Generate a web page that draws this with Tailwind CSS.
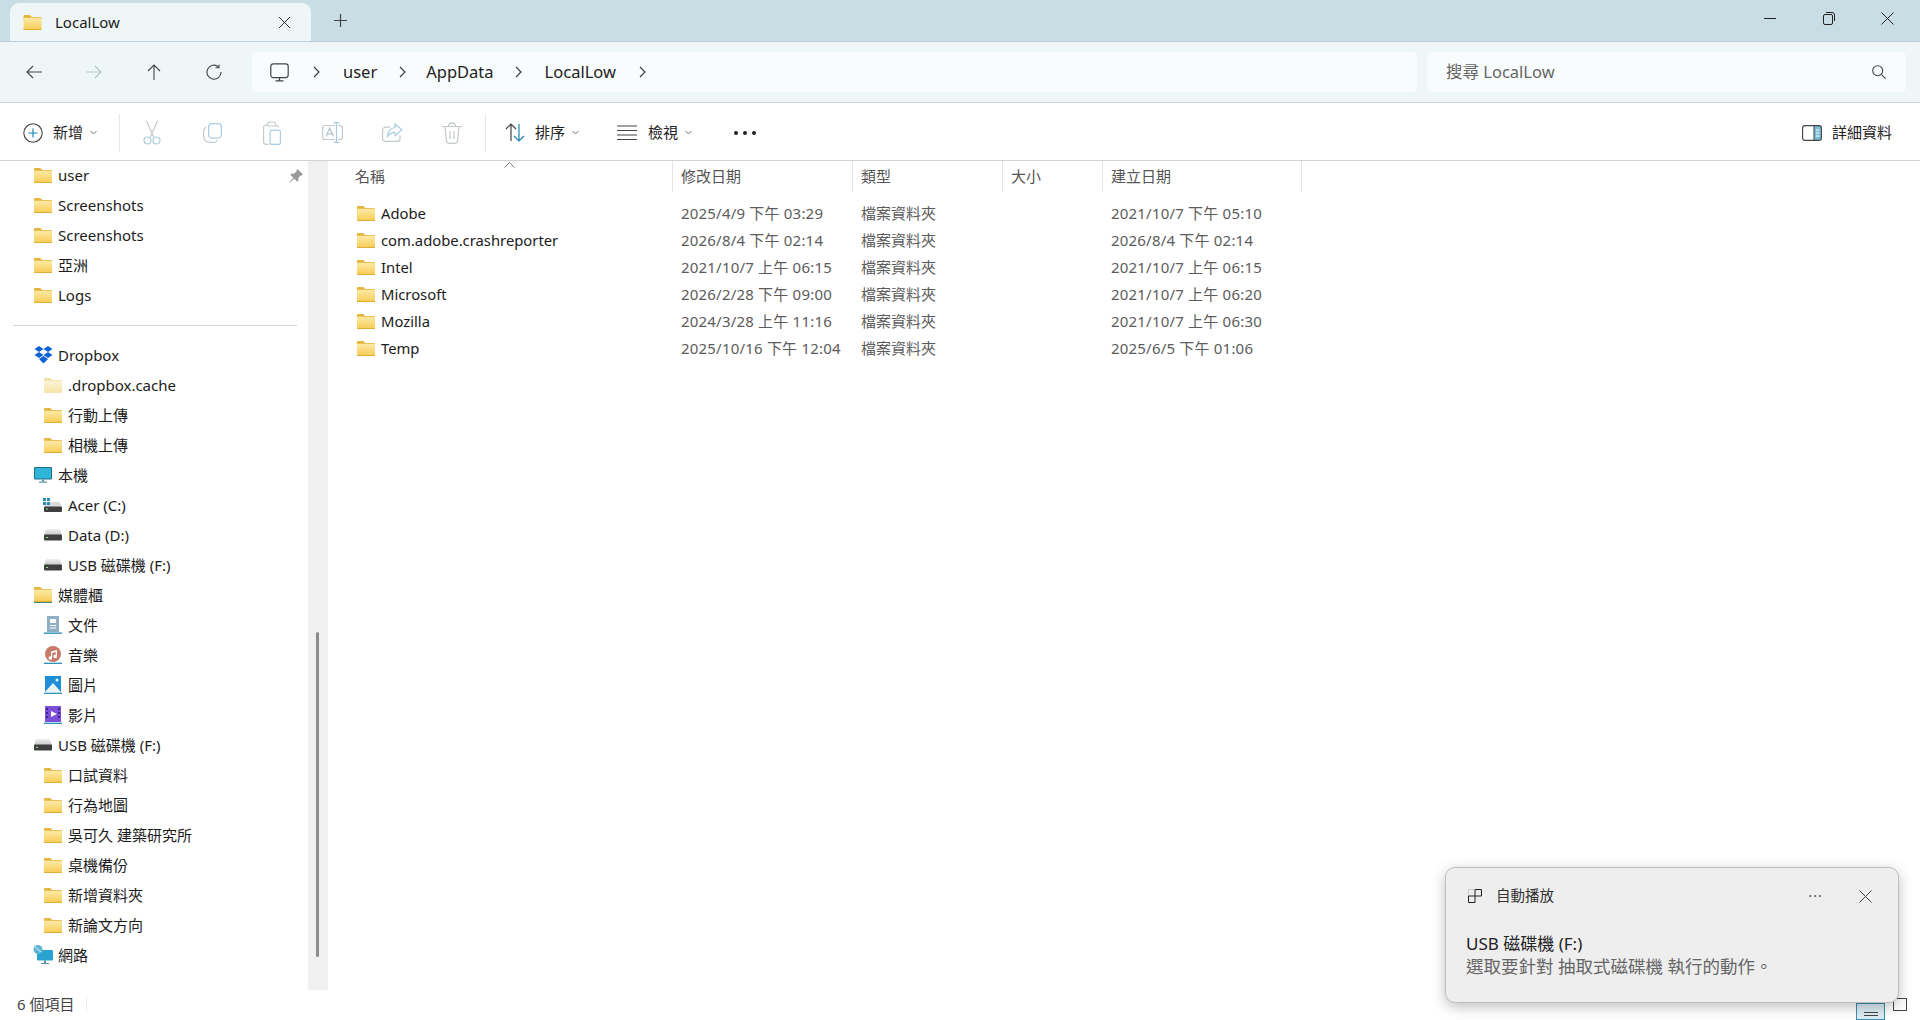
<!DOCTYPE html>
<html lang="zh-Hant">
<head>
<meta charset="UTF-8">
<title>LocalLow - 檔案總管</title>
<script src="https://cdn.jsdelivr.net/npm/@tailwindcss/browser@4"></script>
</head>
<body class="w-[1920px] h-[1020px] overflow-hidden bg-white text-[#1c1c1c] text-[15px] font-['Noto_Sans','Noto_Sans_CJK_TC',sans-serif]">

<!-- shared icons -->
<svg width="0" height="0" class="absolute">
  <defs>
    <linearGradient id="fg" x1="0" y1="0" x2="0" y2="1"><stop offset="0" stop-color="#fdeaa6"/><stop offset="1" stop-color="#f7cb55"/></linearGradient>
    <linearGradient id="fp" x1="0" y1="0" x2="0" y2="1"><stop offset="0" stop-color="#fbf3d6"/><stop offset="1" stop-color="#f6e3a8"/></linearGradient>
    <linearGradient id="dg" x1="0" y1="0" x2="0" y2="1"><stop offset="0" stop-color="#eeeeee"/><stop offset="1" stop-color="#c6c6c6"/></linearGradient>
    <symbol id="folder" viewBox="0 0 18 15">
      <path d="M0 1.2C0 .5.5 0 1.2 0h4.6c.5 0 .8.2 1.1.5L8.300 2H16.800c.7 0 1.200.5 1.200 1.200V5H0z" fill="#e5b53d"/>
      <rect y="2.800" width="18" height="12.200" rx="1" fill="url(#fg)"/>
      <rect y="14" width="18" height="1" fill="#e2ad35"/>
    </symbol>
    <symbol id="folderpale" viewBox="0 0 18 15">
      <path d="M0 1.2C0 .5.5 0 1.2 0h4.600c.5 0 .8.2 1.100.5L8.300 2h8.500c.7 0 1.200.5 1.200 1.200V5H0z" fill="#efdfa8"/>
      <rect y="2.800" width="18" height="12.200" rx="1" fill="url(#fp)"/>
    </symbol>
    <symbol id="drive" viewBox="0 0 18 12">
      <path d="M3.500 0h11c1 0 1.500.5 2 1.500L18 6.500H0l1.500-5C2 .5 2.500 0 3.500 0z" fill="url(#dg)"/>
      <rect y="5.500" width="18" height="6" rx="1" fill="#3f3f3f"/>
      <rect x="2" y="8" width="2" height="1" fill="#9adf8f"/>
    </symbol>
  </defs>
</svg>

<!-- title bar -->
<div class="h-[42px] flex bg-[#c9dde4] border-b border-[#bccfd8] pl-[10px]">
  <div class="w-[301px] h-[38px] mt-[3px] px-[13px] flex items-center bg-[#eff6f8] rounded-t-[9px]">
    <svg class="w-[19px] h-[15px]"><use href="#folder"/></svg>
    <span class="ml-[13px] text-[15px]">LocalLow</span>
    <svg class="ml-auto mr-[7px]" width="13" height="13" viewBox="0 0 13 13" fill="none" stroke="#333" stroke-width="1"><path d="M1 1l11 11M12 1L1 12"/></svg>
  </div>
  <div class="w-[58px] flex items-center justify-center">
    <svg width="13" height="13" viewBox="0 0 13 13" fill="none" stroke="#444" stroke-width="1.200"><path d="M6.500 0v13M0 6.500h13"/></svg>
  </div>
  <div class="ml-auto flex h-[36px] pr-[3px]">
    <div class="w-[59px] flex items-center justify-center"><div class="w-[12px] h-px bg-[#222]"></div></div>
    <div class="w-[59px] flex items-center justify-center">
      <svg width="12" height="13" viewBox="0 0 12 13" fill="none" stroke="#222" stroke-width="1"><rect x=".5" y="2.500" width="9" height="10" rx="1.500"/><path d="M3 .5h6c1.500 0 2.500 1 2.500 2.500v6"/></svg>
    </div>
    <div class="w-[59px] flex items-center justify-center">
      <svg width="13" height="13" viewBox="0 0 13 13" fill="none" stroke="#222" stroke-width="1"><path d="M.5.500l12 12M12.500.500l-12 12"/></svg>
    </div>
  </div>
</div>

<!-- navigation row -->
<div class="h-[61px] flex items-center bg-[#eff6f8] border-b border-[#c9d2d6] pl-[4px] pr-[14px]">
  <div class="w-[60px] flex justify-center">
    <svg width="16" height="14" viewBox="0 0 16 14" fill="none" stroke="#444" stroke-width="1.100"><path d="M16 7H1M7 1L1 7l6 6"/></svg>
  </div>
  <div class="w-[60px] flex justify-center">
    <svg width="16" height="14" viewBox="0 0 16 14" fill="none" stroke="#b8c2c6" stroke-width="1.100"><path d="M0 7h15M9 1l6 6-6 6"/></svg>
  </div>
  <div class="w-[60px] flex justify-center">
    <svg width="14" height="16" viewBox="0 0 14 16" fill="none" stroke="#444" stroke-width="1.100"><path d="M7 16V1M1 7l6-6 6 6"/></svg>
  </div>
  <div class="w-[60px] flex justify-center">
    <svg width="16" height="16" viewBox="0 0 16 16" fill="none" stroke="#444" stroke-width="1.100"><path d="M12.500 2.800A7 7 0 1 0 15 8"/><path d="M9.500 2.800h3.500V-.5" transform="translate(0 1)"/></svg>
  </div>
  <div class="ml-[8px] w-[1165px] h-[40px] rounded-[5px] bg-[#f9fcfd] flex items-center text-[16.500px] text-[#222]">
    <svg class="ml-[18px]" width="19" height="19" viewBox="0 0 19 19" fill="none" stroke="#444" stroke-width="1.200"><rect x=".8" y=".8" width="17.400" height="13.800" rx="2.500"/><path d="M9.500 14.600v3M5.500 17.800h8"/></svg>
    <svg class="ml-[24px]" width="7" height="12" viewBox="0 0 7 12" fill="none" stroke="#333" stroke-width="1.100"><path d="M1 1l5 5-5 5"/></svg>
    <span class="ml-[23px]">user</span>
    <svg class="ml-[22px]" width="7" height="12" viewBox="0 0 7 12" fill="none" stroke="#333" stroke-width="1.100"><path d="M1 1l5 5-5 5"/></svg>
    <span class="ml-[20px]">AppData</span>
    <svg class="ml-[21px]" width="7" height="12" viewBox="0 0 7 12" fill="none" stroke="#333" stroke-width="1.100"><path d="M1 1l5 5-5 5"/></svg>
    <span class="ml-[23px]">LocalLow</span>
    <svg class="ml-[23px]" width="7" height="12" viewBox="0 0 7 12" fill="none" stroke="#333" stroke-width="1.100"><path d="M1 1l5 5-5 5"/></svg>
  </div>
  <div class="ml-[10px] w-[479px] h-[40px] rounded-[5px] bg-[#f9fcfd] flex items-center pl-[19px] pr-[20px] text-[16.500px] text-[#666]">
    <span>搜尋 LocalLow</span>
    <svg class="ml-auto" width="14" height="14" viewBox="0 0 14 14" fill="none" stroke="#444" stroke-width="1.100"><circle cx="5.700" cy="5.700" r="5"/><path d="M9.300 9.300l4.300 4.300"/></svg>
  </div>
</div>

<!-- command bar -->
<div class="h-[58px] pt-[2px] flex items-center bg-white border-b border-[#cfd3d6] text-[15px] text-[#222]">
  <div class="w-[120px] flex items-center pl-[23px]">
    <svg width="20" height="20" viewBox="0 0 20 20" fill="none"><circle cx="10" cy="10" r="9.200" stroke="#444" stroke-width="1.100"/><path d="M10 5.500v9M5.500 10h9" stroke="#1b87b3" stroke-width="1.200"/></svg>
    <span class="ml-[10px]">新增</span>
    <svg class="ml-[7px]" width="7" height="5" viewBox="0 0 7 5" fill="none" stroke="#777"><path d="M.5 1l3 3 3-3"/></svg>
  </div>
  <div class="w-px h-[38px] bg-[#e8e8e8] -ml-px"></div>
  <div class="w-[60px] flex justify-center ml-[2px]">
    <svg width="18" height="24" viewBox="0 0 18 24" fill="none" stroke-width="1.200"><path d="M3.500 0l7.500 16.500M14.500 0L7 16.500" stroke="#c4c9cc"/><circle cx="4.500" cy="19.500" r="3.500" stroke="#a9cde0"/><circle cx="13.500" cy="19.500" r="3.500" stroke="#a9cde0"/></svg>
  </div>
  <div class="w-[60px] flex justify-center">
    <svg width="19" height="20" viewBox="0 0 19 20" fill="none" stroke-width="1.200"><rect x="5.600" y=".6" width="12.800" height="14.500" rx="3.500" stroke="#a9cde0"/><path d="M3.300 4.300C1.600 5 .6 6.500.6 8.300v5.200c0 3.300 2.600 5.900 5.900 5.900h4.200c1.700 0 3-.8 3.700-2.200" stroke="#c4c9cc"/></svg>
  </div>
  <div class="w-[60px] flex justify-center">
    <svg width="18" height="24" viewBox="0 0 18 24" fill="none" stroke-width="1.200"><path d="M4.500 4H3C1.600 4 .6 5 .6 6.500v14C.6 22 1.600 23.400 3 23.400h2.500" stroke="#c4c9cc"/><path d="M4.500 3.500C4.500 2 5.500 1 7 1h3c1.500 0 2.500 1 2.500 2.500V5h-8zM12.500 4.500h1c1.300 0 2 .8 2 2" stroke="#c4c9cc"/><rect x="7.100" y="9.100" width="10.300" height="14.300" rx="2" stroke="#a9cde0"/></svg>
  </div>
  <div class="w-[60px] flex justify-center">
    <svg width="21" height="21" viewBox="0 0 21 21" fill="none" stroke-width="1.200"><path d="M13 3.500H3.200C1.800 3.500.6 4.600.6 6v9c0 1.400 1.200 2.500 2.600 2.500H13M16 3.500h2c1.300 0 2.400 1.100 2.400 2.500v9c0 1.400-1.100 2.500-2.400 2.500h-2" stroke="#c4c9cc"/><path d="M14.500 .6v19.800M11.500 .6h6M11.500 20.400h6" stroke="#a9cde0"/><path d="M4 14.500l3.700-8.500 3.700 8.500M5.300 11.800h4.800" stroke="#b5c3cb"/></svg>
  </div>
  <div class="w-[60px] flex justify-center">
    <svg width="21" height="19" viewBox="0 0 21 19" fill="none" stroke-width="1.200"><path d="M18 12.500v2.900c0 1.700-1.300 3-3 3H3.600c-1.700 0-3-1.300-3-3V7.200c0-1.700 1.300-3 3-3H8" stroke="#c4c9cc"/><path d="M13 1l7 5.800-7 5.800V9.300c-3.500 0-5.700 1.300-7.300 4C5.700 9 8.500 4.800 13 4.500z" stroke="#a9cde0"/></svg>
  </div>
  <div class="w-[60px] flex justify-center">
    <svg width="20" height="22" viewBox="0 0 20 22" fill="none" stroke="#c4c9cc" stroke-width="1.200"><path d="M0 4.500h20M6.500 4.500C6.500 2 8 .8 10 .8s3.500 1.200 3.500 3.700M3 4.500l1.500 14.300c.1 1.600 1.100 2.600 2.700 2.600h5.600c1.600 0 2.600-1 2.700-2.600L17 4.500M8 9v8M12 9v8"/></svg>
  </div>
  <div class="w-px h-[38px] bg-[#e8e8e8] ml-[3px]"></div>
  <div class="w-[124px] flex items-center pl-[19px]">
    <svg width="21" height="19" viewBox="0 0 21 19" fill="none" stroke-width="1.200"><path d="M6 18V1M1 6l5-5 5 5" stroke="#444"/><path d="M14 1v17M9 13l5 5 5-5" stroke="#1b87b3"/></svg>
    <span class="ml-[9px]">排序</span>
    <svg class="ml-[7px]" width="7" height="5" viewBox="0 0 7 5" fill="none" stroke="#777"><path d="M.5 1l3 3 3-3"/></svg>
  </div>
  <div class="w-[106px] flex items-center pl-[7px]">
    <svg width="20" height="15" viewBox="0 0 20 15" fill="none" stroke="#444" stroke-width="1.100"><path d="M0 1h20M0 5.500h20M0 10h20M0 14.500h20"/></svg>
    <span class="ml-[11px]">檢視</span>
    <svg class="ml-[7px]" width="7" height="5" viewBox="0 0 7 5" fill="none" stroke="#777"><path d="M.5 1l3 3 3-3"/></svg>
  </div>
  <div class="ml-[18px] flex gap-[5px]">
    <div class="w-[4px] h-[4px] rounded-full bg-[#222]"></div>
    <div class="w-[4px] h-[4px] rounded-full bg-[#222]"></div>
    <div class="w-[4px] h-[4px] rounded-full bg-[#222]"></div>
  </div>
  <div class="ml-auto flex items-center pr-[28px]">
    <svg width="20" height="16" viewBox="0 0 20 16" fill="none"><rect x="12" y="1" width="7.400" height="14" fill="#79bcd8"/><rect x=".6" y=".6" width="18.800" height="14.800" rx="2.500" stroke="#444" stroke-width="1.100"/><path d="M12 1v14" stroke="#444"/><path d="M14 5h3.500M14 8h3.500M14 11h3.500" stroke="#fff"/></svg>
    <span class="ml-[10px]">詳細資料</span>
  </div>
</div>

<!-- body -->
<div class="h-[829px] flex">
  <!-- navigation pane -->
  <div class="w-[308px] overflow-hidden -mt-px">
    <div class="h-[30px] flex items-center pl-[34px] relative">
      <svg class="w-[18px] h-[15px]"><use href="#folder"/></svg><span class="ml-[6px]">user</span>
      <svg class="absolute left-[289px] top-[9px]" width="14" height="14" viewBox="0 0 14 14" fill="#9a9a9a"><path d="M8.500 0L14 5.500l-1 1-1-.2-2.700 2.700.2 2.500-1.200 1.200-3-3L1 13.500l-.5-.5 3.800-4.300-3-3L2.500 4.500 5 4.700 7.700 2 7.500 1z"/></svg>
    </div>
    <div class="h-[30px] flex items-center pl-[34px]"><svg class="w-[18px] h-[15px]"><use href="#folder"/></svg><span class="ml-[6px]">Screenshots</span></div>
    <div class="h-[30px] flex items-center pl-[34px]"><svg class="w-[18px] h-[15px]"><use href="#folder"/></svg><span class="ml-[6px]">Screenshots</span></div>
    <div class="h-[30px] flex items-center pl-[34px]"><svg class="w-[18px] h-[15px]"><use href="#folder"/></svg><span class="ml-[6px]">亞洲</span></div>
    <div class="h-[30px] flex items-center pl-[34px]"><svg class="w-[18px] h-[15px]"><use href="#folder"/></svg><span class="ml-[6px]">Logs</span></div>
    <div class="ml-[13px] mr-[11px] mt-[15px] mb-[14px] h-px bg-[#d5d5d5]"></div>

    <div class="h-[30px] flex items-center pl-[34px]">
      <svg width="19" height="18" viewBox="0 0 19 18" fill="#0f62d6"><path d="M5 0l4.500 3L5 6 .5 3zM14 0l4.500 3L14 6 9.500 3zM.5 9L5 6l4.500 3L5 12zM18.500 9L14 6 9.500 9l4.500 3zM9.500 10l4.500 3-4.500 4.500L5 13z"/></svg>
      <span class="ml-[5px]">Dropbox</span>
    </div>
    <div class="h-[30px] flex items-center pl-[44px]"><svg class="w-[18px] h-[15px]"><use href="#folderpale"/></svg><span class="ml-[6px]">.dropbox.cache</span></div>
    <div class="h-[30px] flex items-center pl-[44px]"><svg class="w-[18px] h-[15px]"><use href="#folder"/></svg><span class="ml-[6px]">行動上傳</span></div>
    <div class="h-[30px] flex items-center pl-[44px]"><svg class="w-[18px] h-[15px]"><use href="#folder"/></svg><span class="ml-[6px]">相機上傳</span></div>

    <div class="h-[30px] flex items-center pl-[34px]">
      <svg width="18" height="16" viewBox="0 0 18 16"><rect width="18" height="12.500" rx="1" fill="#1e6f8c"/><rect x="1" y="1" width="16" height="10.500" fill="#2fb6d6"/><rect x="8" y="12.500" width="2" height="2" fill="#5b8fa6"/><rect x="5" y="14.500" width="8" height="1.200" fill="#5b8fa6"/></svg>
      <span class="ml-[6px]">本機</span>
    </div>
    <div class="h-[30px] flex items-center pl-[43px]">
      <svg width="19" height="15" viewBox="0 0 19 15"><path d="M4.500 4h11c1 0 1.500.5 2 1.500L19 9.500H1l1.500-4c.5-1 1-1.500 2-1.500z" fill="#dadada"/><rect x="1" y="8.500" width="18" height="5.500" rx="1" fill="#3f3f3f"/><rect x="3" y="10.500" width="2" height="1" fill="#9adf8f"/><path d="M0 0h3v3H0zM4 0h3v3H4zM0 4h3v3H0zM4 4h3v3H4z" fill="#2d8fb5"/></svg>
      <span class="ml-[6px]">Acer (C:)</span>
    </div>
    <div class="h-[30px] flex items-center pl-[44px]"><svg class="w-[18px] h-[12px]"><use href="#drive"/></svg><span class="ml-[6px]">Data (D:)</span></div>
    <div class="h-[30px] flex items-center pl-[44px]"><svg class="w-[18px] h-[12px]"><use href="#drive"/></svg><span class="ml-[6px]">USB 磁碟機 (F:)</span></div>

    <div class="h-[30px] flex items-center pl-[34px]">
      <svg width="18" height="16" viewBox="0 0 18 16"><use href="#folder" width="18" height="15"/><rect y="15" width="18" height="1" fill="#3f8f7a"/></svg>
      <span class="ml-[6px]">媒體櫃</span>
    </div>
    <div class="h-[30px] flex items-center pl-[44px]">
      <svg width="18" height="18" viewBox="0 0 18 18"><rect x="3" width="12" height="16" fill="#8fb0c4"/><path d="M6 3h6v4H6zM6 9h6v1H6zM6 11.500h6v1H6z" fill="#fff"/><rect y="16.500" width="18" height="1.300" fill="#1b87b3"/></svg>
      <span class="ml-[6px]">文件</span>
    </div>
    <div class="h-[30px] flex items-center pl-[44px]">
      <svg width="18" height="18" viewBox="0 0 18 18"><circle cx="9" cy="8" r="8" fill="#c9796a"/><path d="M7 5.500l6-1.500v6.500a1.800 1.800 0 1 1-1.200-1.700V6l-3.600 1v5a1.800 1.800 0 1 1-1.200-1.700z" fill="#fff"/><rect y="16.700" width="18" height="1.200" fill="#1b87b3"/></svg>
      <span class="ml-[6px]">音樂</span>
    </div>
    <div class="h-[30px] flex items-center pl-[44px]">
      <svg width="18" height="18" viewBox="0 0 18 18"><rect x="1" width="16" height="16" fill="#1e8fd6"/><path d="M1 16l8-9 8 9z" fill="#e9f5fb"/><circle cx="13" cy="4" r="1.500" fill="#e9f5fb"/><rect y="16.700" width="18" height="1.200" fill="#1b87b3"/></svg>
      <span class="ml-[6px]">圖片</span>
    </div>
    <div class="h-[30px] flex items-center pl-[44px]">
      <svg width="18" height="18" viewBox="0 0 18 18"><rect x="1" width="16" height="16" fill="#7b4fd8"/><path d="M7 5l6 3-6 3z" fill="#fff"/><path d="M2 2h2v2H2zM2 6h2v2H2zM2 10h2v2H2zM14 2h2v2h-2zM14 6h2v2h-2zM14 10h2v2h-2z" fill="#3c2590"/><rect y="16.700" width="18" height="1.200" fill="#1b87b3"/></svg>
      <span class="ml-[6px]">影片</span>
    </div>

    <div class="h-[30px] flex items-center pl-[34px]"><svg class="w-[18px] h-[12px]"><use href="#drive"/></svg><span class="ml-[6px]">USB 磁碟機 (F:)</span></div>
    <div class="h-[30px] flex items-center pl-[44px]"><svg class="w-[18px] h-[15px]"><use href="#folder"/></svg><span class="ml-[6px]">口試資料</span></div>
    <div class="h-[30px] flex items-center pl-[44px]"><svg class="w-[18px] h-[15px]"><use href="#folder"/></svg><span class="ml-[6px]">行為地圖</span></div>
    <div class="h-[30px] flex items-center pl-[44px]"><svg class="w-[18px] h-[15px]"><use href="#folder"/></svg><span class="ml-[6px]">吳可久 建築研究所</span></div>
    <div class="h-[30px] flex items-center pl-[44px]"><svg class="w-[18px] h-[15px]"><use href="#folder"/></svg><span class="ml-[6px]">桌機備份</span></div>
    <div class="h-[30px] flex items-center pl-[44px]"><svg class="w-[18px] h-[15px]"><use href="#folder"/></svg><span class="ml-[6px]">新增資料夾</span></div>
    <div class="h-[30px] flex items-center pl-[44px]"><svg class="w-[18px] h-[15px]"><use href="#folder"/></svg><span class="ml-[6px]">新論文方向</span></div>
    <div class="h-[30px] flex items-center pl-[33px]">
      <svg width="20" height="20" viewBox="0 0 20 20"><rect x="4" y="5" width="16" height="10.500" rx="1" fill="#29a3cf"/><rect x="11" y="15.500" width="2" height="2.500" fill="#5b8fa6"/><rect x="8" y="18" width="8" height="1" fill="#5b8fa6"/><circle cx="5" cy="4.500" r="4.500" fill="#5fb4d6"/><path d="M2 2l6 5" stroke="#dff" stroke-width="1"/></svg>
      <span class="ml-[5px]">網路</span>
    </div>
  </div>

  <!-- scroll track -->
  <div class="w-[20px] bg-[#f0f0f0]">
    <div class="w-[3px] h-[325px] mt-[471px] ml-[8px] rounded-full bg-[#8c8c8c]"></div>
  </div>

  <!-- file list -->
  <div class="flex-1 relative ml-px">
    <div class="grid grid-cols-[343px_180px_150px_100px_200px] h-[31px] items-stretch text-[#555]">
      <div class="pl-[26px] flex items-center">名稱</div>
      <div class="pl-[8px] flex items-center border-l border-[#e5e5e5]">修改日期</div>
      <div class="pl-[8px] flex items-center border-l border-[#e5e5e5]">類型</div>
      <div class="pl-[8px] flex items-center border-l border-[#e5e5e5]">大小</div>
      <div class="pl-[8px] flex items-center border-x border-[#e5e5e5]">建立日期</div>
    </div>
    <svg class="absolute left-[175px] top-[1px]" width="11" height="6" viewBox="0 0 11 6" fill="none" stroke="#777"><path d="M.5 5.500l5-5 5 5"/></svg>

    <div class="pt-[8px] tracking-[0.2px]">
      <div class="grid grid-cols-[343px_180px_150px_100px_200px] h-[27px] items-center text-[#5c5c5c]">
        <div class="pl-[28px] flex items-center text-[#1c1c1c] tracking-normal text-[14.800px]"><svg class="w-[18px] h-[15px]"><use href="#folder"/></svg><span class="ml-[6px]">Adobe</span></div>
        <div class="pl-[9px]">2025/4/9 下午 03:29</div><div class="pl-[9px] tracking-normal">檔案資料夾</div><div></div><div class="pl-[9px]">2021/10/7 下午 05:10</div>
      </div>
      <div class="grid grid-cols-[343px_180px_150px_100px_200px] h-[27px] items-center text-[#5c5c5c]">
        <div class="pl-[28px] flex items-center text-[#1c1c1c] tracking-normal text-[14.800px]"><svg class="w-[18px] h-[15px]"><use href="#folder"/></svg><span class="ml-[6px]">com.adobe.crashreporter</span></div>
        <div class="pl-[9px]">2026/8/4 下午 02:14</div><div class="pl-[9px] tracking-normal">檔案資料夾</div><div></div><div class="pl-[9px]">2026/8/4 下午 02:14</div>
      </div>
      <div class="grid grid-cols-[343px_180px_150px_100px_200px] h-[27px] items-center text-[#5c5c5c]">
        <div class="pl-[28px] flex items-center text-[#1c1c1c] tracking-normal text-[14.800px]"><svg class="w-[18px] h-[15px]"><use href="#folder"/></svg><span class="ml-[6px]">Intel</span></div>
        <div class="pl-[9px]">2021/10/7 上午 06:15</div><div class="pl-[9px] tracking-normal">檔案資料夾</div><div></div><div class="pl-[9px]">2021/10/7 上午 06:15</div>
      </div>
      <div class="grid grid-cols-[343px_180px_150px_100px_200px] h-[27px] items-center text-[#5c5c5c]">
        <div class="pl-[28px] flex items-center text-[#1c1c1c] tracking-normal text-[14.800px]"><svg class="w-[18px] h-[15px]"><use href="#folder"/></svg><span class="ml-[6px]">Microsoft</span></div>
        <div class="pl-[9px]">2026/2/28 下午 09:00</div><div class="pl-[9px] tracking-normal">檔案資料夾</div><div></div><div class="pl-[9px]">2021/10/7 上午 06:20</div>
      </div>
      <div class="grid grid-cols-[343px_180px_150px_100px_200px] h-[27px] items-center text-[#5c5c5c]">
        <div class="pl-[28px] flex items-center text-[#1c1c1c] tracking-normal text-[14.800px]"><svg class="w-[18px] h-[15px]"><use href="#folder"/></svg><span class="ml-[6px]">Mozilla</span></div>
        <div class="pl-[9px]">2024/3/28 上午 11:16</div><div class="pl-[9px] tracking-normal">檔案資料夾</div><div></div><div class="pl-[9px]">2021/10/7 上午 06:30</div>
      </div>
      <div class="grid grid-cols-[343px_180px_150px_100px_200px] h-[27px] items-center text-[#5c5c5c]">
        <div class="pl-[28px] flex items-center text-[#1c1c1c] tracking-normal text-[14.800px]"><svg class="w-[18px] h-[15px]"><use href="#folder"/></svg><span class="ml-[6px]">Temp</span></div>
        <div class="pl-[9px]">2025/10/16 下午 12:04</div><div class="pl-[9px] tracking-normal">檔案資料夾</div><div></div><div class="pl-[9px]">2025/6/5 下午 01:06</div>
      </div>
    </div>
  </div>
</div>

<!-- status bar -->
<div class="h-[30px] flex items-center pl-[17px] pb-[2px] text-[#444] relative">
  <span>6 個項目</span>
  <div class="ml-[12px] w-px h-[16px] bg-[#eeeeee]"></div>
  <div class="ml-auto self-end -mb-[2px] flex items-end pr-[13px]">
    <div class="w-[29px] h-[17px] border border-[#3c8fb5] bg-[#dcedf5] flex flex-col items-center justify-end gap-[2px] pb-[3px]">
      <div class="w-[14px] h-px bg-[#444]"></div>
      <div class="w-[14px] h-px bg-[#444]"></div>
    </div>
    <div class="ml-[8px] mb-[9px] w-[14px] h-[13px] border border-[#444]"></div>
  </div>
</div>

<!-- autoplay notification -->
<div class="absolute left-[1445px] top-[867px] w-[454px] h-[136px] rounded-[10px] bg-[#eeeeee] border border-[#bdbdbd] shadow-[0_4px_14px_rgba(0,0,0,0.25)] pl-[20px] pr-[26px]">
  <div class="h-[56px] flex items-center text-[14.500px] text-[#333]">
    <svg class="ml-[2px]" width="14" height="14" viewBox="0 0 14 14" fill="none"><path d="M.5 7V.5H7" stroke="#ccc"/><path d="M7 .5h6.500V7H.5v6.500H7V.5" stroke="#222"/></svg>
    <span class="ml-[14px]">自動播放</span>
    <span class="ml-auto text-[#555] tracking-[1px]">···</span>
    <svg class="ml-[36px]" width="13" height="13" viewBox="0 0 13 13" fill="none" stroke="#444"><path d="M.5.500l12 12M12.500.500l-12 12"/></svg>
  </div>
  <div class="mt-[8px] text-[17px] leading-[23px] text-[#222]">USB 磁碟機 (F:)</div>
  <div class="text-[17.500px] leading-[23px] text-[#666]">選取要針對 抽取式磁碟機 執行的動作。</div>
</div>

</body>
</html>
